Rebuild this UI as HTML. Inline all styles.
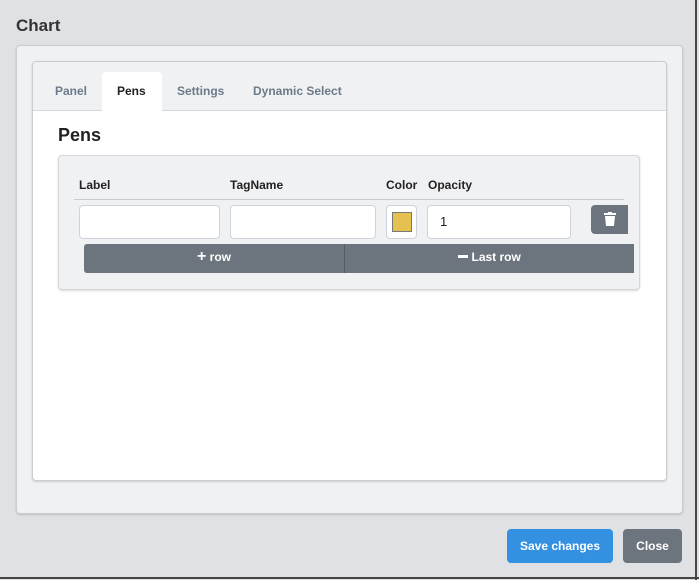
<!DOCTYPE html>
<html><head><style>
*{box-sizing:border-box;margin:0;padding:0}
body{width:699px;height:580px;overflow:hidden;background:#dfe1e5;font-family:"Liberation Sans",sans-serif;position:relative}
.a{position:absolute}
.inp{position:absolute;background:#fff;border:1px solid #ced4da;border-radius:4px}
.lbl{position:absolute;top:178px;font-size:12px;font-weight:bold;color:#222}
.tab{position:absolute;top:84px;font-size:12px;font-weight:bold;color:#6c7a89}
</style></head><body>
<div class="a" style="right:2px;top:0;width:2px;height:580px;background:#444"></div>
<div class="a" style="left:0;bottom:1px;width:699px;height:2px;background:#444"></div>
<div class="a" style="left:16px;top:16px;font-size:17px;font-weight:bold;color:#333">Chart</div>
<div class="a" style="left:16px;top:45px;width:667px;height:469px;background:#f0f1f3;border:1px solid #ccc;border-radius:4px;box-shadow:0 1px 2px rgba(0,0,0,.15)"></div>
<div class="a" style="left:32px;top:61px;width:635px;height:420px;background:#fff;border:1px solid #ccc;border-radius:4px;box-shadow:0 1px 2px rgba(0,0,0,.15);overflow:hidden">
 <div class="a" style="left:0;top:0;width:635px;height:49px;background:#f0f1f3;border-bottom:1px solid #d5d7da"></div>
 <div class="a" style="left:69px;top:10px;width:60px;height:40px;background:#fff;border-radius:4px 4px 0 0"></div>
</div>
<div class="tab" style="left:55px">Panel</div>
<div class="tab" style="left:117px;color:#222">Pens</div>
<div class="tab" style="left:177px">Settings</div>
<div class="tab" style="left:253px">Dynamic Select</div>
<div class="a" style="left:58px;top:125px;font-size:18px;font-weight:bold;color:#222">Pens</div>
<div class="a" style="left:58px;top:155px;width:582px;height:135px;background:#f0f1f3;border:1px solid #d5d7da;border-radius:4px;box-shadow:0 1px 2px rgba(0,0,0,.15)"></div>
<div class="lbl" style="left:79px">Label</div>
<div class="lbl" style="left:230px">TagName</div>
<div class="lbl" style="left:386px">Color</div>
<div class="lbl" style="left:428px">Opacity</div>
<div class="a" style="left:74px;top:199px;width:550px;height:1px;background:#c8cacd"></div>
<div class="inp" style="left:79px;top:205px;width:141px;height:34px"></div>
<div class="inp" style="left:230px;top:205px;width:146px;height:34px"></div>
<div class="inp" style="left:386px;top:205px;width:31px;height:34px"></div>
<div class="a" style="left:392px;top:212px;width:20px;height:20px;background:#e4c150;border:1px solid #777"></div>
<div class="inp" style="left:427px;top:205px;width:144px;height:34px"></div>
<div class="a" style="left:440px;top:214px;font-size:13px;color:#222">1</div>
<div class="a" style="left:591px;top:205px;width:37px;height:29px;background:#6c757d;border-radius:4px 0 0 4px"></div>
<svg class="a" style="left:604px;top:212px" width="12" height="14" viewBox="0 0 12 14"><rect x="0" y="1" width="12" height="2" fill="#fff"/><rect x="4" y="0" width="4" height="2" fill="#fff"/><path d="M1 4h10l-1 10H2z" fill="#fff"/></svg>
<div class="a" style="left:84px;top:244px;width:550px;height:29px;background:#6c757d;border-radius:3px 0 0 3px"></div>
<div class="a" style="left:344px;top:244px;width:1px;height:29px;background:#555c63"></div>
<div class="a" style="left:84px;top:250px;width:260px;text-align:center;color:#fff;font-size:12px;font-weight:bold"><span style="font-size:16px;line-height:12px">+</span> row</div>
<div class="a" style="left:345px;top:250px;width:289px;text-align:center;color:#fff;font-size:12px;font-weight:bold"><span style="display:inline-block;width:10px;height:3px;background:#fff;vertical-align:3px"></span> Last row</div>
<div class="a" style="left:507px;top:529px;width:106px;height:34px;background:#3490e0;border-radius:4px;color:#fff;font-size:12px;font-weight:bold;text-align:center;line-height:34px">Save changes</div>
<div class="a" style="left:623px;top:529px;width:59px;height:34px;background:#6c757d;border-radius:4px;color:#fff;font-size:12px;font-weight:bold;text-align:center;line-height:34px">Close</div>
</body></html>
